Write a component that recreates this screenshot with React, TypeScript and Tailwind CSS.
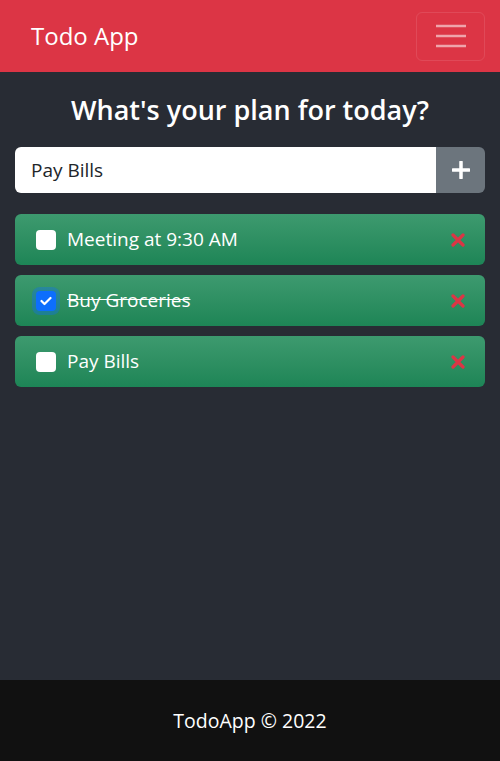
import React, { useState } from "react";

const todos = [
  { id: 1, text: "Meeting at 9:30 AM", done: false },
  { id: 2, text: "Buy Groceries", done: true },
  { id: 3, text: "Pay Bills", done: false },
];

export default function App() {
  const [items, setItems] = useState(todos);
  const [value, setValue] = useState("Pay Bills");

  return (
    <div
      className="flex flex-col min-h-screen bg-[#282c34] text-white"
      style={{ fontFamily: '"Open Sans", "Noto Sans", sans-serif' }}
    >
      <nav className="h-[72px] bg-[#dc3545] flex items-center justify-between pl-[31px] pr-[15px] shrink-0">
        <span className="text-[24px] leading-none">Todo App</span>
        <button className="w-[69px] h-[49px] border border-white/10 rounded-[6px] flex items-center justify-center">
          <svg width="30" height="30" viewBox="0 0 30 30">
            <path
              d="M0 5h30M0 15h30M0 25h30"
              stroke="rgba(255,255,255,0.55)"
              strokeWidth="2.5"
              strokeLinecap="round"
            />
          </svg>
        </button>
      </nav>

      <main className="flex-1 px-[15px] pt-[24px]">
        <h1 className="text-center text-[27px] font-semibold leading-none mb-[24px]">
          What's your plan for today?
        </h1>
        <div className="flex h-[46px] mb-[21px]">
          <input
            value={value}
            onChange={(e) => setValue(e.target.value)}
            className="flex-1 min-w-0 bg-white text-[#212529] text-[19px] px-[16px] rounded-l-[6px] outline-none"
          />
          <button className="w-[49px] bg-[#6c757d] rounded-r-[6px] flex items-center justify-center">
            <svg width="18" height="18" viewBox="0 0 18 18">
              <path d="M9 1v16M1 9h16" stroke="white" strokeWidth="3.5" strokeLinecap="round" />
            </svg>
          </button>
        </div>
        <div className="flex flex-col gap-[10px]">
          {items.map((t) => (
            <div
              key={t.id}
              className="h-[51px] rounded-[6px] bg-gradient-to-b from-[#3d9a6f] to-[#1d8556] flex items-center pl-[21px] pr-[20px]"
            >
              <span
                className={
                  t.done
                    ? "w-[20px] h-[20px] rounded-[4px] bg-[#0d6efd] flex items-center justify-center shadow-[0_0_0_4px_rgba(13,110,253,0.35)]"
                    : "w-[20px] h-[20px] rounded-[4px] bg-white"
                }
                onClick={() =>
                  setItems(items.map((i) => (i.id === t.id ? { ...i, done: !i.done } : i)))
                }
              >
                {t.done && (
                  <svg width="12" height="10" viewBox="0 0 12 10">
                    <path d="M1.5 5l3 3 6-6" stroke="white" strokeWidth="2.2" fill="none" strokeLinecap="round" strokeLinejoin="round" />
                  </svg>
                )}
              </span>
              <span className={"ml-[11px] text-[19px] flex-1 " + (t.done ? "line-through" : "")}>
                {t.text}
              </span>
              <svg width="14" height="14" viewBox="0 0 14 14">
                <path d="M2 2l10 10M12 2L2 12" stroke="#dc3545" strokeWidth="3.2" strokeLinecap="round" />
              </svg>
            </div>
          ))}
        </div>
      </main>

      <footer className="h-[81px] bg-[#111111] flex items-center justify-center shrink-0">
        <span className="text-[19.5px]">TodoApp © 2022</span>
      </footer>
    </div>
  );
}
